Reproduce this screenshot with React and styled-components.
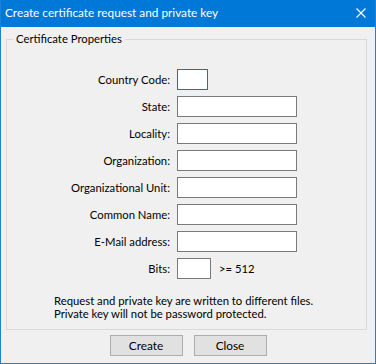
import React from "react";
import styled, { createGlobalStyle } from "styled-components";

const GlobalStyle = createGlobalStyle`
	html, body {
		margin: 0;
		padding: 0;
		background: #f0f0f0;
	}
	body {
		font-family: Lato, "Noto Sans", sans-serif;
		font-size: 11.3px;
		color: #000;
	}
`;

const fields = [
	{ label: "Country Code:", size: "tiny", focused: true },
	{ label: "State:" },
	{ label: "Locality:" },
	{ label: "Organization:" },
	{ label: "Organizational Unit:" },
	{ label: "Common Name:" },
	{ label: "E-Mail address:" },
];

function App() {
	return (
		<>
			<GlobalStyle />
			<Window>
				<TitleBar>
					<Title>Create certificate request and private key</Title>
					<CloseGlyph width="10" height="10" viewBox="0 0 10 10">
						<path d="M0.5 0.5 L9.5 9.5 M9.5 0.5 L0.5 9.5" stroke="#fff" strokeWidth="1.1" />
					</CloseGlyph>
				</TitleBar>
				<Content>
					<GroupBox>
						<legend>Certificate Properties</legend>
						<FormGrid>
							{fields.map((f) => (
								<React.Fragment key={f.label}>
									<Label>{f.label}</Label>
									<Field>
										<TextBox $size={f.size} $focused={f.focused} />
									</Field>
								</React.Fragment>
							))}
							<Label>Bits:</Label>
							<Field>
								<TextBox $size="small" />
								<Hint>&gt;= 512</Hint>
							</Field>
						</FormGrid>
						<Note>
							Request and private key are written to different files.
							<br />
							Private key will not be password protected.
						</Note>
					</GroupBox>
					<ButtonRow>
						<Button>Create</Button>
						<Button>Close</Button>
					</ButtonRow>
				</Content>
			</Window>
		</>
	);
}

const Window = styled.div`
	width: 376px;
	height: 364px;
	box-sizing: border-box;
	border: 1px solid #1883d7;
	border-top: none;
	background: #f0f0f0;
	display: flex;
	flex-direction: column;
`;

const TitleBar = styled.div`
	height: 27px;
	background: #0078d7;
	display: flex;
	align-items: center;
	justify-content: space-between;
	padding: 0 9px 0 4px;
	color: #fff;
	flex-shrink: 0;
`;

const Title = styled.span`
	font-size: 11.8px;
	line-height: 14px;
	margin-top: -1px;
`;

const CloseGlyph = styled.svg`
	display: block;
	margin-top: -1px;
`;

const Content = styled.div`
	padding: 5px 8px 0 5px;
`;

const GroupBox = styled.fieldset`
	margin: 0;
	padding: 23px 0 7px 0;
	border: 1px solid #d9d9d9;
	height: 298px;
	box-sizing: border-box;
	legend {
		margin-left: 6px;
		padding: 0 3px;
		line-height: 14px;
	}
`;

const FormGrid = styled.div`
	display: grid;
	grid-template-columns: 163px auto;
	column-gap: 7px;
	row-gap: 6px;
	align-items: center;
`;

const Label = styled.span`
	text-align: right;
	line-height: 21px;
	white-space: nowrap;
`;

const Field = styled.div`
	display: flex;
	align-items: center;
	gap: 8px;
`;

const widths = { tiny: "31px", small: "34px" };

const TextBox = styled.div`
	width: ${(p) => widths[p.$size] || "120px"};
	height: 21px;
	box-sizing: border-box;
	background: #fff;
	border: 1px solid ${(p) => (p.$focused ? "#0078d7" : "#7a7a7a")};
`;

const Hint = styled.span`
	line-height: 21px;
`;

const Note = styled.p`
	margin: 15px 0 0 47px;
	line-height: 13px;
`;

const ButtonRow = styled.div`
	display: flex;
	justify-content: center;
	gap: 11px;
	margin-top: 5px;
	padding-left: 3px;
`;

const Button = styled.button`
	width: 73px;
	height: 21px;
	padding: 0;
	background: #e1e1e1;
	border: 1px solid #adadad;
	border-radius: 0;
	font-family: inherit;
	font-size: 11.8px;
	color: #000;
`;

export default App;
